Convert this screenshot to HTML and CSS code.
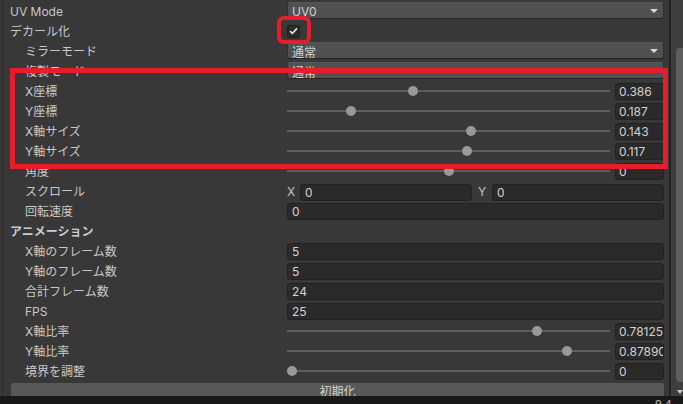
FILE: index.html
```html
<!DOCTYPE html>
<html lang="ja">
<head>
<meta charset="utf-8">
<link rel="stylesheet" href="styles.css">
</head>
<body>
<div class="window">
  <div class="main">
    <div class="content">
      <div class="row"><div class="label">UV Mode</div><div class="ctrl"><div class="dropdown"><span>UV0</span><i class="arrow"></i></div></div></div>
      <div class="row"><div class="label">デカール化</div><div class="ctrl"><div class="checkbox"><svg width="9" height="8" viewBox="0 0 9 8"><path d="M1 4.2 L3.4 6.4 L8 1.4" fill="none" stroke="#e6e6e6" stroke-width="1.6"/></svg></div></div></div>
      <div class="row"><div class="label ind">ミラーモード</div><div class="ctrl"><div class="dropdown"><span>通常</span><i class="arrow"></i></div></div></div>
      <div class="row"><div class="label ind">複製モード</div><div class="ctrl"><div class="dropdown"><span>通常</span><i class="arrow"></i></div></div></div>
      <div class="row"><div class="label ind">X座標</div><div class="ctrl slider"><div class="track"><i class="thumb" style="left:121px"></i></div><div class="field num">0.386</div></div></div>
      <div class="row"><div class="label ind">Y座標</div><div class="ctrl slider"><div class="track"><i class="thumb" style="left:59px"></i></div><div class="field num">0.187</div></div></div>
      <div class="row"><div class="label ind">X軸サイズ</div><div class="ctrl slider"><div class="track"><i class="thumb" style="left:179px"></i></div><div class="field num">0.143</div></div></div>
      <div class="row"><div class="label ind">Y軸サイズ</div><div class="ctrl slider"><div class="track"><i class="thumb" style="left:175px"></i></div><div class="field num">0.117</div></div></div>
      <div class="row"><div class="label ind">角度</div><div class="ctrl slider"><div class="track"><i class="thumb" style="left:157px"></i></div><div class="field num">0</div></div></div>
      <div class="row"><div class="label ind">スクロール</div><div class="ctrl vec"><span class="axis">X</span><div class="field">0</div><span class="axis c">Y</span><div class="field">0</div></div></div>
      <div class="row"><div class="label ind">回転速度</div><div class="ctrl"><div class="field">0</div></div></div>
      <div class="row"><div class="label bold">アニメーション</div><div class="ctrl"></div></div>
      <div class="row"><div class="label ind">X軸のフレーム数</div><div class="ctrl"><div class="field">5</div></div></div>
      <div class="row"><div class="label ind">Y軸のフレーム数</div><div class="ctrl"><div class="field">5</div></div></div>
      <div class="row"><div class="label ind">合計フレーム数</div><div class="ctrl"><div class="field">24</div></div></div>
      <div class="row"><div class="label ind">FPS</div><div class="ctrl"><div class="field">25</div></div></div>
      <div class="row"><div class="label ind">X軸比率</div><div class="ctrl slider"><div class="track"><i class="thumb" style="left:245px"></i></div><div class="field num">0.78125</div></div></div>
      <div class="row"><div class="label ind">Y軸比率</div><div class="ctrl slider"><div class="track"><i class="thumb" style="left:275px"></i></div><div class="field num">0.87890</div></div></div>
      <div class="row"><div class="label ind">境界を調整</div><div class="ctrl slider"><div class="track"><i class="thumb" style="left:0px"></i></div><div class="field num">0</div></div></div>
      <div class="btnrow"><div class="button">初期化</div></div>
    </div>
    <div class="scrollbar"><div class="thumbbar"></div><i class="down"></i></div>
    <div class="hl hl-big"></div>
    <div class="hl hl-check"></div>
  </div>
  <div class="statusbar"><span>9.4</span></div>
</div>
</body>
</html>
```

FILE: styles.css
```css
* { box-sizing: border-box; }
html, body { margin: 0; padding: 0; }
body {
  width: 683px;
  height: 404px;
  overflow: hidden;
  background: #383838;
  font-family: "Inter", "Noto Sans CJK JP", sans-serif;
  font-size: 12px;
  color: #c8c8c8;
}
.window { display: flex; flex-direction: column; height: 404px; }
.main { position: relative; display: flex; height: 396px; overflow: hidden; }
.content {
  width: 669px;
  padding-right: 5px;
  border-left: 1px solid #2b2b2b;
  margin-left: 2px;
  display: flex;
  flex-direction: column;
}
.row { display: flex; height: 20px; align-items: stretch; }
.label { width: 284px; padding: 3px 0 0 7px; white-space: nowrap; line-height: 17px; }
.label.ind { padding-left: 22px; }
.label.bold { font-weight: 700; color: #cccccc; }
.ctrl { flex: 1; display: flex; align-items: center; height: 20px; }
.dropdown {
  flex: 1;
  height: 17px;
  margin-top: 1px;
  background: #515151;
  border: 1px solid #303030;
  border-top-color: #585858;
  border-bottom-color: #242424;
  border-radius: 3px;
  display: flex;
  align-items: center;
  justify-content: space-between;
  padding: 1px 5px 0 4px;
  color: #d2d2d2;
}
.arrow {
  width: 0; height: 0;
  border-left: 4px solid transparent;
  border-right: 4px solid transparent;
  border-top: 4px solid #d8d8d8;
}
.checkbox {
  width: 13px; height: 13px;
  margin-top: 2px;
  background: #2a2a2a;
  border: 1px solid #1f1f1f;
  border-radius: 2px;
  display: flex; align-items: center; justify-content: center;
}
.field {
  flex: 1;
  height: 17px;
  margin-top: 2px;
  background: #2a2a2a;
  border: 1px solid #212121;
  border-radius: 3px;
  padding-left: 4px;
  line-height: 16px;
  color: #d2d2d2;
  white-space: nowrap;
  overflow: hidden;
}
.slider { gap: 5px; }
.track { position: relative; width: 323px; height: 2px; background: #5e5e5e; margin-top: 1px; }
.thumb {
  position: absolute;
  top: -4px;
  width: 10px; height: 10px;
  border-radius: 50%;
  background: #999999;
}
.field.num { flex: 0 0 49px; padding-left: 3px; }
.vec { display: grid; grid-template-columns: 13px 1fr 20px 1fr; }
.axis { line-height: 20px; padding-top: 2px; color: #c4c4c4; }
.axis.c { text-align: center; }
.btnrow { padding: 3px 0 0 8px; }
.button {
  height: 18px;
  background: #585858;
  border-radius: 3px 3px 0 0;
  text-align: center;
  line-height: 16px;
  padding-top: 1px;
  color: #d2d2d2;
}
.scrollbar {
  position: relative;
  width: 14px;
  border-left: 2px solid #232323;
  background: #3e3e3e;
}
.thumbbar {
  position: absolute;
  left: 5px; right: 0;
  top: 48px; bottom: 14px;
  background: #5f5f5f;
  border-radius: 4px 0 0 4px;
}
.down {
  position: absolute;
  left: 6px; top: 390px;
  width: 0; height: 0;
  border-left: 3px solid transparent;
  border-right: 3px solid transparent;
  border-top: 4px solid #c8c8c8;
}
.hl { position: absolute; border-style: solid; border-color: #e41e2a; }
.hl-big { left: 10px; top: 68px; width: 658px; height: 101px; border-width: 5px; }
.hl-check { left: 277px; top: 16px; width: 34px; height: 28px; border-width: 4px; border-radius: 7px; }
.statusbar {
  height: 8px;
  background: #191919;
  position: relative;
  overflow: hidden;
}
.statusbar span {
  position: absolute;
  left: 655px; top: 3px;
  font-size: 11px;
  line-height: 11px;
  color: #bbbbbb;
}
```
